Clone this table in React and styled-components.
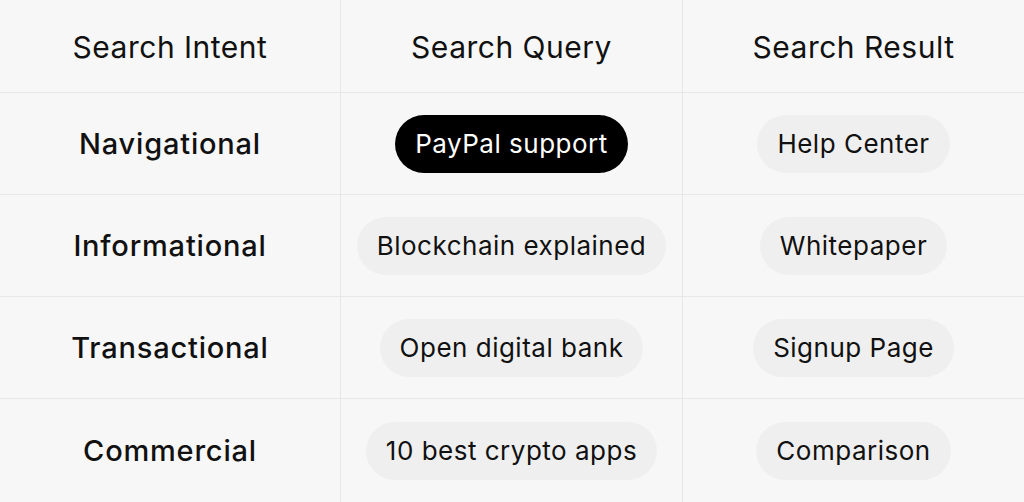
import React from "react";
import styled, { createGlobalStyle } from "styled-components";

const Global = createGlobalStyle`
  html, body { margin: 0; padding: 0; background: #f7f7f7; }
  body { font-family: Inter, "Noto Sans", sans-serif; color: #111; }
`;

const Table = styled.div`
  display: grid;
  grid-template-columns: 340px 341px 341px;
  grid-template-rows: 92px 101px 101px 101px 103px;
  gap: 1px;
  background: #e7e7e7;
  width: 1024px;
  height: 502px;
`;

const Cell = styled.div`
  background: #f7f7f7;
  display: flex;
  align-items: center;
  justify-content: center;
`;

const HeadText = styled.span`
  font-size: 30px;
  font-weight: 400;
  letter-spacing: 0.5px;
  color: #111;
  padding-top: 2px;
`;

const Label = styled.span`
  font-size: 29px;
  font-weight: 500;
  letter-spacing: 0.8px;
  color: #111;
`;

const Pill = styled.span`
  display: inline-flex;
  align-items: center;
  height: 58px;
  padding: 0 20px;
  border-radius: 29px;
  font-size: 26px;
  font-weight: 400;
  letter-spacing: 0.5px;
  background: ${(p) => (p.$dark ? "#000" : "#efefef")};
  color: ${(p) => (p.$dark ? "#fff" : "#111")};
`;

const rows = [
  { intent: "Navigational", query: "PayPal support", result: "Help Center", dark: true },
  { intent: "Informational", query: "Blockchain explained", result: "Whitepaper" },
  { intent: "Transactional", query: "Open digital bank", result: "Signup Page" },
  { intent: "Commercial", query: "10 best crypto apps", result: "Comparison" },
];

export default function App() {
  return (
    <>
      <Global />
      <Table>
        <Cell><HeadText>Search Intent</HeadText></Cell>
        <Cell><HeadText>Search Query</HeadText></Cell>
        <Cell><HeadText>Search Result</HeadText></Cell>
        {rows.map((r) => (
          <React.Fragment key={r.intent}>
            <Cell><Label>{r.intent}</Label></Cell>
            <Cell><Pill $dark={r.dark}>{r.query}</Pill></Cell>
            <Cell><Pill>{r.result}</Pill></Cell>
          </React.Fragment>
        ))}
      </Table>
    </>
  );
}
